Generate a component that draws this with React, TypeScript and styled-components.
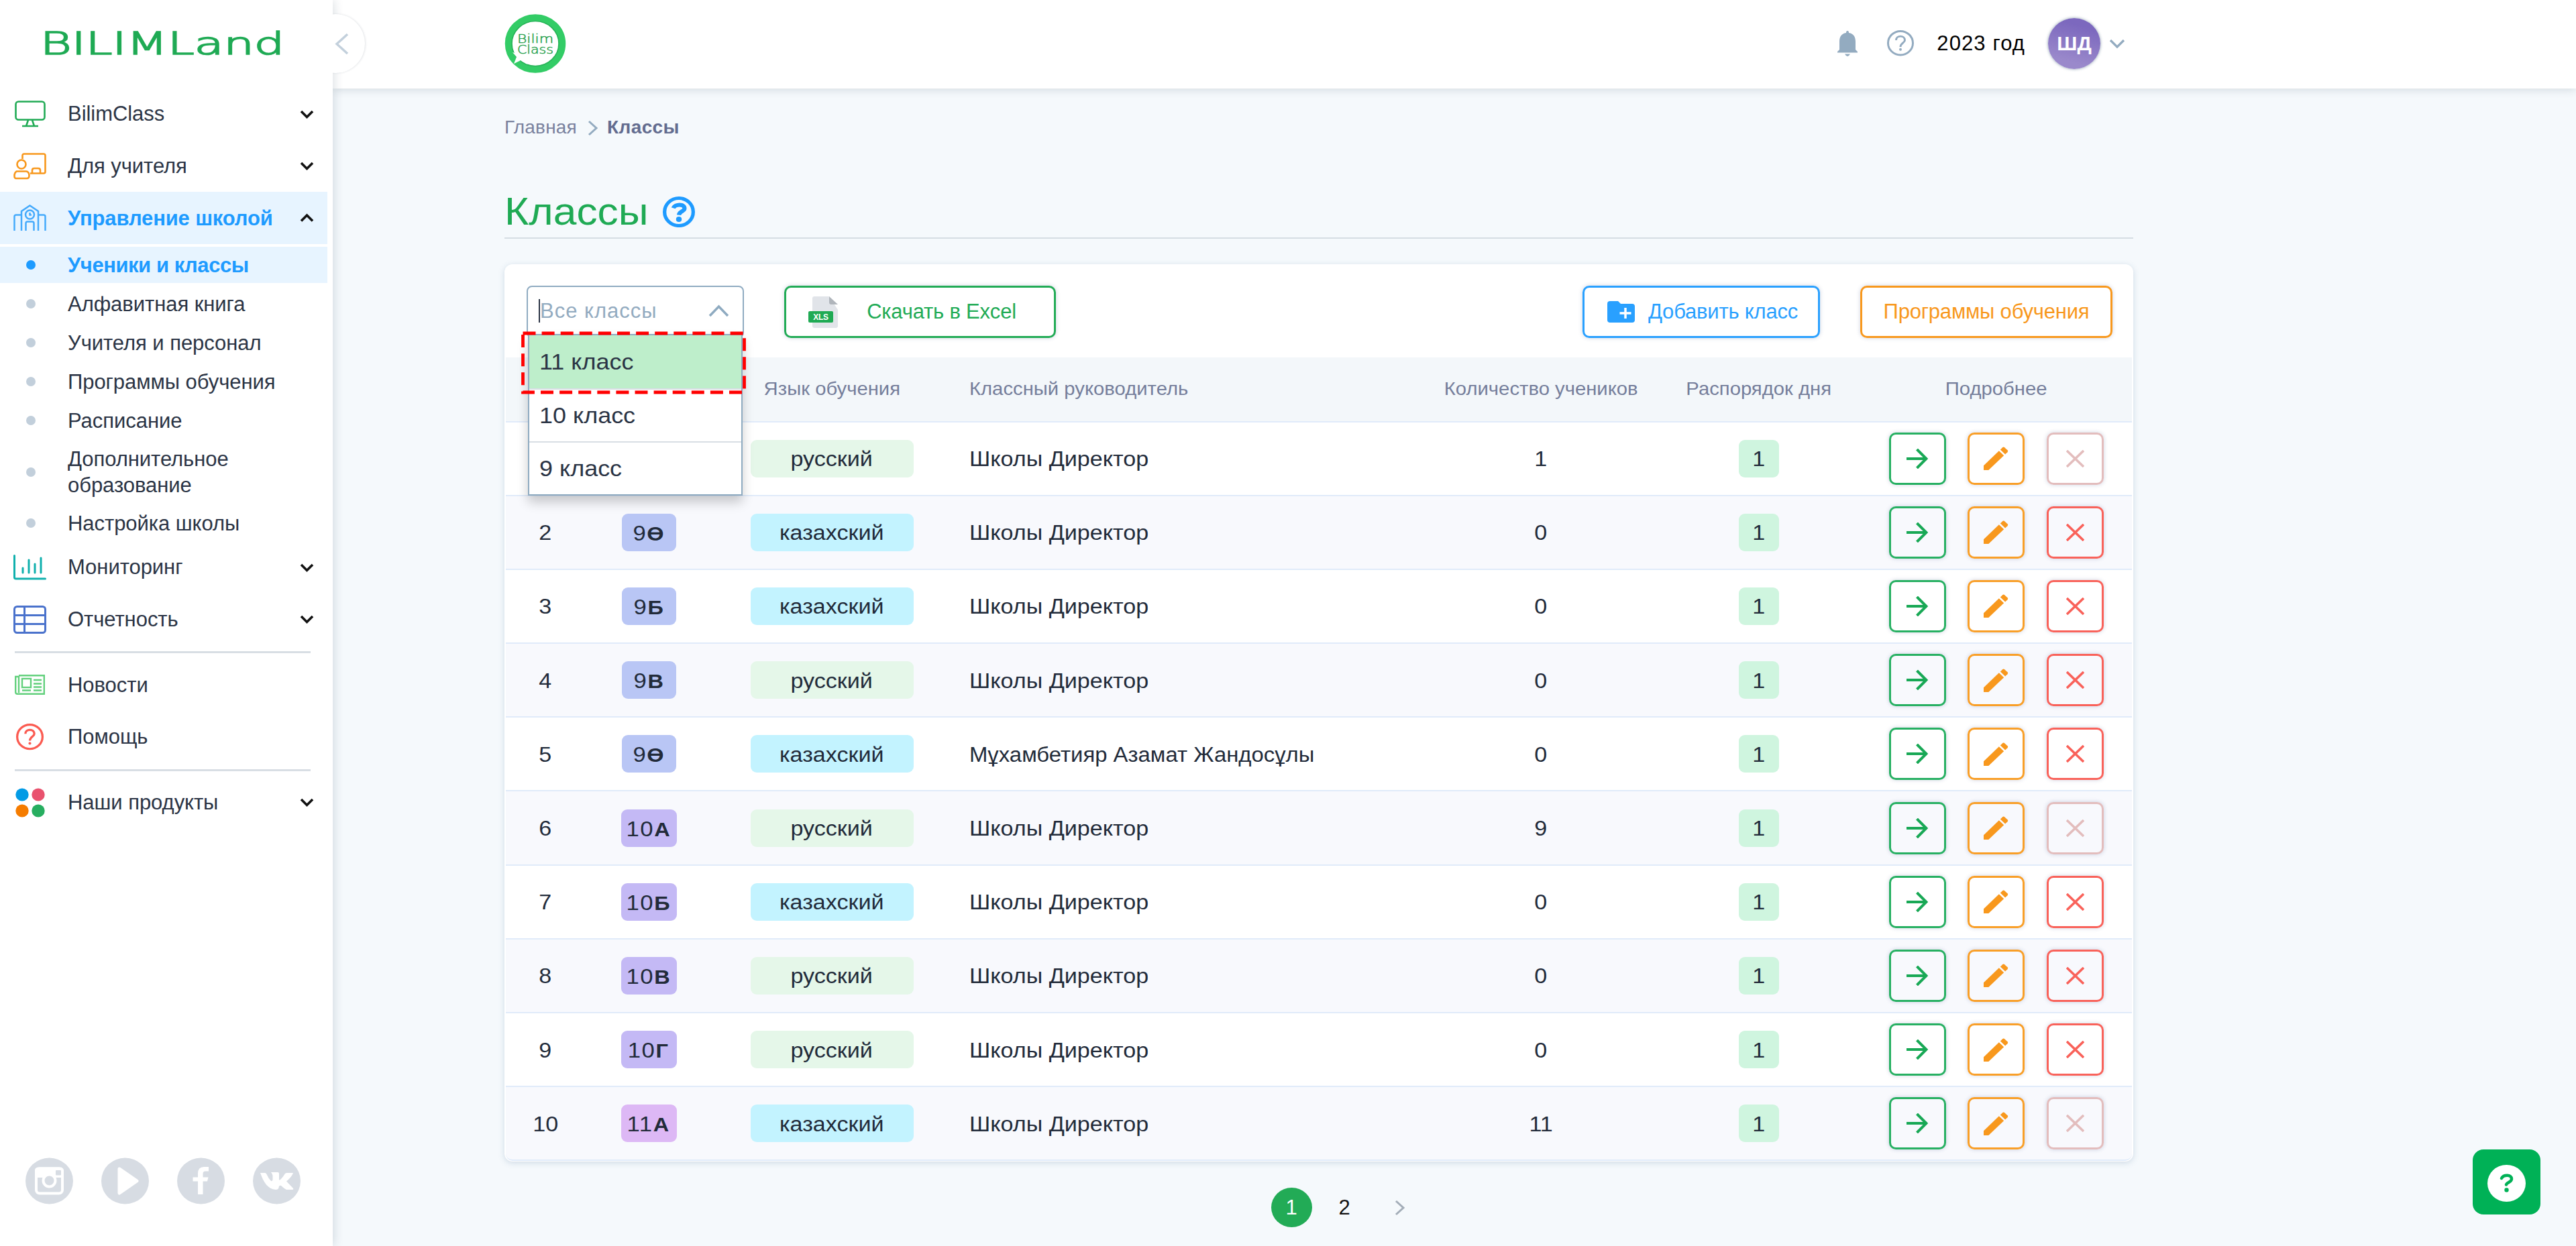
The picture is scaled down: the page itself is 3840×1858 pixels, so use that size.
import * as React from 'react';
import styled, { createGlobalStyle, css } from 'styled-components';

const GlobalStyle = createGlobalStyle`
  * {
    box-sizing: border-box;
  }
  body {
    margin: 0;
    overflow: hidden;
    background-color: #f5f9fc;
    color: #2b3445;
    font-family: 'Liberation Sans', Arial, sans-serif;
    font-size: 31px;
  }
  svg {
    display: block;
    flex: none;
  }
`;

/* The design uses an extended grotesque, so labels are widened a little */
const wide = (ratio: number, origin = 'center') => css`
  display: inline-block;
  white-space: nowrap;
  transform: scaleX(${ratio});
  transform-origin: ${origin} center;
`;

const Page = styled.div`
  display: flex;
  height: 1858px;
`;

/* ---------- sidebar ---------- */

const Sidebar = styled.aside`
  position: relative;
  z-index: 2;
  display: flex;
  flex-direction: column;
  flex: none;
  width: 496px;
  background-color: #fff;
  box-shadow: 2px 0 14px rgba(40, 60, 80, 0.16);
`;

const Brand = styled.div`
  height: 131px;
  padding: 42px 0 0 60px;
`;

const Collapse = styled.button`
  position: absolute;
  top: 21px;
  right: -48px;
  z-index: -1;
  display: flex;
  align-items: center;
  justify-content: flex-end;
  width: 88px;
  height: 88px;
  padding: 0 26px 0 0;
  border: none;
  border-radius: 50%;
  background-color: #fff;
  box-shadow: 1px 0 3px rgba(40, 60, 80, 0.14);
`;

const CollapseCover = styled.div`
  position: absolute;
  top: 0;
  right: 0;
  z-index: -1;
  width: 60px;
  height: 130px;
  background-color: #fff;
`;

const Nav = styled.nav`
  display: flex;
  flex-direction: column;
  flex: 1;
  width: 488px;
`;

const NavItem = styled.a<{ $active?: boolean }>`
  display: flex;
  align-items: center;
  height: 77.7px;
  padding-right: 22px;
  color: ${(p) => (p.$active ? '#1e9bff' : '#2b3445')};
  background-color: ${(p) => (p.$active ? '#e7f4ff' : 'transparent')};
  font-weight: ${(p) => (p.$active ? 'bold' : 'normal')};
`;

const NavIcon = styled.span`
  display: flex;
  justify-content: center;
  width: 89px;
`;

const NavLabel = styled.span<{ $spacing?: number }>`
  flex: 1;
  padding: 1px 0 0 12px;
  letter-spacing: ${(p) => p.$spacing ?? -0.05}px;
  white-space: nowrap;
`;

const SubItem = styled(NavItem)<{ $tall?: boolean }>`
  height: ${(p) => (p.$tall ? 91 : 54)}px;
  margin-top: 4px;
  line-height: 39px;
`;

const Dot = styled.span<{ $active?: boolean }>`
  width: 14px;
  height: 14px;
  margin-left: 2px;
  border-radius: 50%;
  background-color: ${(p) => (p.$active ? '#1e9bff' : '#c2cfdb')};
`;

const Divider = styled.hr`
  width: 441px;
  height: 3px;
  margin: 9px 0 8px 22px;
  border: none;
  background-color: #d8dee4;
`;

const Socials = styled.div`
  display: flex;
  gap: 42px;
  padding: 0 0 62px 38px;
`;

/* ---------- header ---------- */

const Main = styled.main`
  display: flex;
  flex-direction: column;
  flex: 1;
`;

const Header = styled.header`
  display: flex;
  align-items: center;
  height: 132px;
  padding: 0 674px 3px 256px;
  background-color: #fff;
  box-shadow: 0 2px 12px rgba(40, 60, 80, 0.16);
`;

const HeaderTools = styled.div`
  display: flex;
  align-items: center;
  margin-left: auto;
  color: #000;
`;

const Year = styled.span`
  margin: 0 34px 0 34px;
  padding-top: 1px;
  letter-spacing: 1.1px;
`;

const Avatar = styled.div`
  display: flex;
  align-items: center;
  justify-content: center;
  width: 78px;
  height: 76px;
  margin-right: 15px;
  border-radius: 50%;
  background: linear-gradient(195deg, #7c68be 20%, #9a89cb 80%);
  box-shadow: 0 0 4px rgba(60, 90, 120, 0.6);
  color: #fff;
  font-size: 30px;
  font-weight: bold;
`;

/* ---------- content ---------- */

const Content = styled.section`
  width: 2428px;
  margin-left: 256px;
`;

const Breadcrumbs = styled.div`
  display: flex;
  align-items: center;
  height: 40px;
  margin-top: 38px;
  color: #7a829e;
  font-size: 28px;
  letter-spacing: 0.2px;

  svg {
    margin: 2px 16px 0 18px;
  }
  b {
    color: #636c8f;
    letter-spacing: 0.4px;
  }
`;

const TitleRow = styled.div`
  display: flex;
  align-items: center;
  gap: 36px;
  height: 82px;
  margin: 64px 0 38px;
  padding-top: 4px;
  border-bottom: 2px solid #d6dde3;
`;

const Title = styled.h1`
  margin: -4px 0 0;
  color: #1faa54;
  font-size: 58px;
  font-weight: normal;
  ${wide(1.075, 'left')}
`;

const Card = styled.div`
  height: 1338px;
  padding: 0 2px;
  border-radius: 12px;
  background-color: #fff;
  box-shadow: 0 2px 10px rgba(70, 110, 150, 0.22);
`;

const Toolbar = styled.div`
  position: relative;
  display: flex;
  height: 139px;
  padding: 32px 29px 0 31px;
`;

const Select = styled.div`
  display: flex;
  align-items: center;
  justify-content: space-between;
  width: 324px;
  height: 78px;
  padding: 0 22px 3px 16px;
  border: 2px solid #8fabc1;
  border-radius: 8px;
  color: #93abc0;
`;

const Placeholder = styled.span`
  border-left: 2px solid #2b3445;
  line-height: 35px;
  letter-spacing: 1px;
`;

const Menu = styled.ul`
  position: absolute;
  top: 104px;
  left: 33px;
  z-index: 1;
  width: 320px;
  margin: 0;
  padding: 0;
  border: 2px solid #8fabc1;
  background-color: #fff;
  box-shadow: 0 10px 16px rgba(0, 0, 0, 0.2);
  list-style: none;
`;

const Option = styled.li<{ $selected?: boolean }>`
  display: flex;
  align-items: center;
  height: 79px;
  padding: 1px 0 0 15px;
  background-color: ${(p) => (p.$selected ? '#beeecb' : '#fff')};
  font-size: 33px;

  & + & {
    border-top: 2px solid #d8dee4;
  }
  span {
    ${wide(1.09, 'left')}
  }
`;

const Highlight = styled.svg`
  position: absolute;
  top: 100px;
  left: 23px;
  z-index: 2;
`;

const Button = styled.button<{ $color: string; $width: number }>`
  display: flex;
  align-items: center;
  justify-content: center;
  width: ${(p) => p.$width}px;
  height: 78px;
  padding: 0;
  border: 3px solid ${(p) => p.$color};
  border-radius: 10px;
  background-color: transparent;
  box-shadow: 0 0 6px rgba(40, 60, 120, 0.22);
  color: ${(p) => p.$color};
  font: inherit;
  letter-spacing: -0.2px;
`;

const ExcelButton = styled(Button)`
  margin-left: 60px;
  gap: 43px;
  padding-right: 23px;
`;

const AddButton = styled(Button)`
  gap: 20px;
  margin: 0 60px 0 auto;
  padding-left: 4px;
`;

const Row = styled.div<{ $striped?: boolean }>`
  display: grid;
  grid-template-columns: 118px 190px 356px 698px 362px 287px 1fr;
  align-items: center;
  justify-items: center;
  height: 110.2px;
  border-bottom: 2px solid #e0ebfa;
  background-color: ${(p) => (p.$striped ? '#f8f9fd' : '#fff')};
  color: #222b3a;

  &:last-child {
    border-radius: 0 0 10px 10px;
  }
`;

const HeadRow = styled(Row)`
  height: 96.5px;
  background-color: #f3f7fa;
  color: #757e9b;
  font-size: 28px;
`;

const HeadCell = styled.span<{ $left?: boolean }>`
  ${wide(1.045)}
  ${(p) => p.$left && 'justify-self: start; margin-left: 27px; transform-origin: left;'}
`;

const Cell = styled.span<{ $left?: boolean; $compact?: boolean }>`
  ${wide(1.1)}
  padding-top: 3px;
  ${(p) => p.$left && 'justify-self: start; margin-left: 27px; transform-origin: left;'}
  ${(p) => p.$compact && 'transform: scaleX(1.06);'}
`;

const Pill = styled.span<{ $bg: string; $width: number }>`
  display: flex;
  align-items: center;
  justify-content: center;
  width: ${(p) => p.$width}px;
  height: 56px;
  border-radius: 9px;
  background-color: ${(p) => p.$bg};
`;

const GradeText = styled.span`
  ${wide(1.12)}
  padding-top: 4px;
  letter-spacing: 1.4px;

  b {
    font-size: 29px;
  }
`;

const Actions = styled.div`
  display: flex;
  gap: 32.5px;
  padding-left: 8px;
`;

const HeadActions = styled.div`
  padding-left: 8px;
`;

const Pagination = styled.div`
  display: flex;
  align-items: center;
  justify-content: center;
  height: 61px;
  margin: 38px 0 0 54px;
  color: #111;
`;

const PageNumber = styled.span<{ $current?: boolean }>`
  display: flex;
  align-items: center;
  justify-content: center;
  width: 61px;
  height: 59px;
  margin-right: 18px;
  border-radius: 50%;
  background-color: ${(p) => (p.$current ? '#22ab56' : 'transparent')};
  color: ${(p) => (p.$current ? '#fff' : '#111')};

  & + svg {
    margin-left: 28px;
  }
`;

const HelpFab = styled.button`
  position: fixed;
  right: 53px;
  bottom: 47px;
  display: flex;
  align-items: center;
  justify-content: center;
  width: 101px;
  height: 97px;
  padding: 4px 0 0;
  border: none;
  border-radius: 16px;
  background-color: #00b156;
`;

/* ---------- icons ---------- */

interface ChevronProps {
  dir: 'up' | 'down' | 'left' | 'right';
  long: number;
  short: number;
  color: string;
  weight: number;
}

function Chevron({ dir, long, short, color, weight }: ChevronProps) {
  const horizontal = dir === 'left' || dir === 'right';
  const w = horizontal ? short : long;
  const h = horizontal ? long : short;
  const points = {
    down: `0,0 ${w / 2},${h} ${w},0`,
    up: `0,${h} ${w / 2},0 ${w},${h}`,
    left: `${w},0 0,${h / 2} ${w},${h}`,
    right: `0,0 ${w},${h / 2} 0,${h}`,
  }[dir];
  return (
    <svg width={w} height={h} overflow="visible" fill="none" stroke={color} strokeWidth={weight}>
      <polyline points={points} />
    </svg>
  );
}

function BrandLogo() {
  return (
    <svg width="364" height="44" overflow="visible">
      <text
        x="0"
        y="38.5"
        fill="#1faa54"
        stroke="#1faa54"
        strokeWidth="1.7"
        fontFamily="'DejaVu Sans', sans-serif"
        fontWeight="200"
        fontSize="45.5"
        textLength="364"
        lengthAdjust="spacingAndGlyphs"
      >
        BILIMLand
      </text>
    </svg>
  );
}

function ClassLogo() {
  return (
    <svg width="92" height="88" viewBox="0 0 92 88">
      <ellipse cx="46" cy="44" rx="40" ry="38.5" fill="#fff" stroke="#33cc66" strokeWidth="10.5" />
      <ellipse cx="46" cy="44" rx="35" ry="33.5" fill="none" stroke="#28b358" strokeWidth="1.6" />
      <path d="M12 57 L18 64 L14 74 L24 69 L34 75 L30 62Z" fill="#fff" />
      <g
        fill="#279f4c"
        stroke="#279f4c"
        strokeWidth="0.5"
        fontFamily="'DejaVu Sans', sans-serif"
        fontWeight="200"
        fontSize="18"
      >
        <text x="19" y="43" textLength="54" lengthAdjust="spacingAndGlyphs">Bilim</text>
        <text x="19" y="58.5" textLength="54" lengthAdjust="spacingAndGlyphs">Class</text>
      </g>
    </svg>
  );
}

interface QuestionProps {
  size: number;
  color: string;
  weight: number;
  bold?: boolean;
}

function QuestionCircle({ size, color, weight, bold }: QuestionProps) {
  const hook = bold
    ? 'M13 15 C15 9.5 27 9 27 15.5 C27 19.5 20.5 19 20 24'
    : 'M13.5 15.5 C13.5 7.5 26.5 7.5 26.5 15.5 C26.5 19.5 20 20 20 26';
  return (
    <svg width={size} height={size * 0.96} viewBox="0 0 40 40" fill="none" stroke={color} preserveAspectRatio="none">
      <circle cx="20" cy="20" r={20 - weight / 2} strokeWidth={weight} />
      <path d={hook} strokeWidth={bold ? 5.2 : weight} />
      <circle cx="20" cy={bold ? 29.5 : 30} r={bold ? 3.5 : 2} fill={color} stroke="none" />
    </svg>
  );
}

const navIcons = {
  monitor: (
    <svg width="46" height="40" viewBox="0 0 46 40" fill="none" stroke="#22ab56" strokeWidth="2.6">
      <rect x="1.5" y="1.5" width="43" height="27" rx="4" />
      <path d="M20 29 L17 38 M26 29 L29 38 M11 38 H35" />
    </svg>
  ),
  teacher: (
    <svg width="49" height="40" viewBox="0 0 49 40" fill="none" stroke="#f8981d" strokeWidth="2.6">
      <path d="M13.5 9 V4 Q13.5 1.5 16 1.5 H45 Q47.5 1.5 47.5 4 V28 Q47.5 30.5 45 30.5 H25" />
      <path d="M28 30 V26 Q28 23 31 23 H37 Q40 23 40 26 V30" />
      <circle cx="12" cy="17" r="6.5" />
      <path d="M5 27.5 H19 Q23.5 28 23.5 34 Q23.5 38 20 38 H4 Q1.5 38 1.5 34.5 Q1.5 29 5 27.5Z" />
    </svg>
  ),
  school: (
    <svg width="49" height="40" viewBox="0 0 49 40" fill="none" stroke="#45aafc" strokeWidth="2.5">
      <path d="M1.5 39 V18 Q1.5 15.5 4 15.5 H11 M12 39 V10 L24.5 1.5 L37 10 V39 M38 15.5 H45 Q47.5 15.5 47.5 18 V39" />
      <circle cx="24.5" cy="15" r="6.5" />
      <path d="M24.5 12 V15.5 H27" />
      <path d="M18.5 39 V28 Q18.5 25.5 21 25.5 H28 Q30.5 25.5 30.5 28 V39" />
    </svg>
  ),
  chart: (
    <svg width="49" height="38" viewBox="0 0 49 38" fill="none" stroke="#10b0ad" strokeWidth="3" strokeLinecap="round">
      <path d="M1.5 1.5 V34 Q1.5 36 4 36 H47.5" />
      <path d="M14 20 V27 M23 8 V27 M32 14 V27 M41 5 V27" />
    </svg>
  ),
  table: (
    <svg width="49" height="42" viewBox="0 0 49 42" fill="none" stroke="#4a72cc" strokeWidth="3">
      <rect x="1.5" y="1.5" width="46" height="39" rx="4" />
      <path d="M16.5 1.5 V40 M1.5 14.5 H47.5 M1.5 27.5 H47.5" />
    </svg>
  ),
  news: (
    <svg width="45" height="30" viewBox="0 0 45 30" fill="none" stroke="#62d07c" strokeWidth="2.4">
      <path d="M6 1.2 H43.8 V28.8 H4 Q1.2 28.8 1.2 26 V3 H6 V27" />
      <rect x="11" y="6" width="13" height="13" />
      <path d="M28 8 H40 M28 13.5 H40 M28 18.5 H40 M28 23.5 H40 M11 23.5 H24" />
    </svg>
  ),
  help: <QuestionCircle size={41} color="#fb5b51" weight={3.2} />,
  products: (
    <svg width="44" height="44" viewBox="0 0 44 44">
      <ellipse cx="10" cy="10" rx="9.7" ry="9.5" fill="#039be5" />
      <ellipse cx="34" cy="10" rx="9.7" ry="9.5" fill="#e9526e" />
      <ellipse cx="10" cy="34" rx="9.7" ry="9.5" fill="#f57c00" />
      <ellipse cx="34" cy="34" rx="9.7" ry="9.5" fill="#27ae60" />
    </svg>
  ),
};

function SocialIcons() {
  const back = <ellipse cx="35.5" cy="35" rx="35.5" ry="34.5" fill="#d7dce3" />;
  return (
    <Socials>
      <svg width="71" height="70">
        {back}
        <rect x="16" y="16.5" width="39" height="37" rx="5" fill="none" stroke="#fff" strokeWidth="4" />
        <path d="M14 19 Q14 14.5 20 14.5 H51 Q57 14.5 57 20 V30 H14Z" fill="#fff" />
        <circle cx="35.5" cy="34.5" r="9" fill="#d7dce3" stroke="#fff" strokeWidth="4" />
        <rect x="45" y="19" width="8" height="7.5" rx="1" fill="#d7dce3" />
      </svg>
      <svg width="71" height="70">
        {back}
        <path d="M27 17 L53 35 L27 53Z" fill="#fff" stroke="#fff" strokeWidth="5" strokeLinejoin="round" />
      </svg>
      <svg width="71" height="70">
        {back}
        <path d="M31 55 V35.5 H23.5 V29.5 H31 V24 Q31 14 40 14 H47 V20.5 H42 Q38.5 20.5 38.5 24 V29.5 H46.5 L45 35.5 H38.5 V55Z" fill="#fff" />
      </svg>
      <svg width="71" height="70">
        {back}
        <path d="M11 23 H18 Q20 23 21 26 Q23 31 27 35 Q29 36 29.5 33 V27 Q29 24 27 22 H37 Q39 22 39 24 V32 Q39 35 41 33 Q45 29 48 24 Q49 23 51 23 H60 Q58 29 50 35.5 L60 46 Q61 48 58 48 H50 Q46 46 42 42 Q39 41 38.5 45 Q38 48 34 48 C22 47 16 37 11 23Z" fill="#fff" />
      </svg>
    </Socials>
  );
}

function BellIcon() {
  return (
    <svg width="30" height="38" viewBox="0 0 30 38" fill="#93abc0">
      <path d="M15 0 C17 0 17 2 17 3 C24 4 27 9 27 16 V28 L30 31 V32.5 H0 V31 L3 28 V16 C3 9 6 4 13 3 C13 2 13 0 15 0Z" />
      <path d="M11 34.5 H19 Q17 38 15 38 Q13 38 11 34.5Z" />
    </svg>
  );
}

function XlsIcon() {
  return (
    <svg width="44" height="47" viewBox="0 0 44 47">
      <path d="M9 0 H31 L44 20 V44 Q44 47 41 47 H9 Q6 47 6 44 V3 Q6 0 9 0Z" fill="#e1e4e9" />
      <path d="M31 0 L44 12 H34 Q31 12 31 9Z" fill="#b0b5bb" />
      <rect x="0" y="22" width="37" height="17" rx="2" fill="#1faa54" />
      <text x="18.5" y="35" textAnchor="middle" fill="#fff" fontSize="12" fontWeight="bold">XLS</text>
    </svg>
  );
}

function FolderPlusIcon() {
  return (
    <svg width="41" height="32" viewBox="0 0 41 32">
      <path d="M4 0 H16 L20 4 H37 Q41 4 41 8 V28 Q41 32 37 32 H4 Q0 32 0 28 V4 Q0 0 4 0Z" fill="#29a0ff" />
      <path d="M27 10 V26 M18.5 18 H35.5" stroke="#fff" strokeWidth="3.5" />
    </svg>
  );
}

function ArrowIcon() {
  return (
    <svg width="32" height="30" viewBox="0 0 32 30" fill="none" stroke="#18a855" strokeWidth="4">
      <path d="M0 15 H29 M15.5 1 L29.5 15 L15.5 29" />
    </svg>
  );
}

function PencilIcon() {
  return (
    <svg width="37" height="35" viewBox="0 0 38 36" fill="#f8981d">
      <path d="M0 29 L23.5 6.5 L31 13.5 L7.5 36 H0Z" />
      <path d="M25.5 4.5 L29 1.2 Q30.5 0 32 1.2 L36.5 5.5 Q38 7 36.5 8.5 L33 11.7Z" />
    </svg>
  );
}

function CrossIcon({ color }: { color: string }) {
  return (
    <svg width="27" height="26" viewBox="0 0 27 26" fill="none" stroke={color} strokeWidth="3.6">
      <path d="M1 1 L26 25 M26 1 L1 25" />
    </svg>
  );
}

/* ---------- data ---------- */

const subItems = [
  'Алфавитная книга',
  'Учителя и персонал',
  'Программы обучения',
  'Расписание',
  'Дополнительное\nобразование',
  'Настройка школы',
];

interface SchoolClass {
  no?: number;
  grade?: number;
  letter?: string;
  lang: 'русский' | 'казахский';
  teacher: string;
  pupils: number;
}

const director = 'Школы Директор';

const classes: SchoolClass[] = [
  // number and grade of this row are under the open menu
  { lang: 'русский', teacher: director, pupils: 1 },
  { no: 2, grade: 9, letter: 'Ө', lang: 'казахский', teacher: director, pupils: 0 },
  { no: 3, grade: 9, letter: 'Б', lang: 'казахский', teacher: director, pupils: 0 },
  { no: 4, grade: 9, letter: 'В', lang: 'русский', teacher: director, pupils: 0 },
  { no: 5, grade: 9, letter: 'Ө', lang: 'казахский', teacher: 'Мұхамбетияр Азамат Жандосұлы', pupils: 0 },
  { no: 6, grade: 10, letter: 'А', lang: 'русский', teacher: director, pupils: 9 },
  { no: 7, grade: 10, letter: 'Б', lang: 'казахский', teacher: director, pupils: 0 },
  { no: 8, grade: 10, letter: 'В', lang: 'русский', teacher: director, pupils: 0 },
  { no: 9, grade: 10, letter: 'Г', lang: 'русский', teacher: director, pupils: 0 },
  { no: 10, grade: 11, letter: 'А', lang: 'казахский', teacher: director, pupils: 11 },
];

const gradeColors: Record<number, string> = { 9: '#b9c6f5', 10: '#c4b9f5', 11: '#ddb8f5' };
const langColors = { русский: '#e5f7e9', казахский: '#c3f3ff' };

/* ---------- sections ---------- */

interface NavEntryProps {
  icon: React.ReactNode;
  label: string;
  expandable?: boolean;
  active?: boolean;
}

function NavEntry({ icon, label, expandable, active }: NavEntryProps) {
  return (
    <NavItem $active={active}>
      <NavIcon>{icon}</NavIcon>
      <NavLabel $spacing={active ? -0.15 : undefined}>{label}</NavLabel>
      {expandable && <Chevron dir={active ? 'up' : 'down'} long={17} short={8.5} color="#111" weight={3.6} />}
    </NavItem>
  );
}

function SideMenu() {
  return (
    <Sidebar>
      <Collapse>
        <Chevron dir="left" long={29} short={16} color="#c3d0dc" weight={3.5} />
      </Collapse>
      <CollapseCover />
      <Brand>
        <BrandLogo />
      </Brand>
      <Nav>
        <NavEntry icon={navIcons.monitor} label="BilimClass" expandable />
        <NavEntry icon={navIcons.teacher} label="Для учителя" expandable />
        <NavEntry icon={navIcons.school} label="Управление школой" expandable active />
        <SubItem $active>
          <NavIcon>
            <Dot $active />
          </NavIcon>
          <NavLabel $spacing={-0.45}>Ученики и классы</NavLabel>
        </SubItem>
        {subItems.map((item) => (
          <SubItem key={item} $tall={item.includes('\n')}>
            <NavIcon>
              <Dot />
            </NavIcon>
            <NavLabel>
              {item.split('\n').map((line) => (
                <div key={line}>{line}</div>
              ))}
            </NavLabel>
          </SubItem>
        ))}
        <NavEntry icon={navIcons.chart} label="Мониторинг" expandable />
        <NavEntry icon={navIcons.table} label="Отчетность" expandable />
        <Divider />
        <NavEntry icon={navIcons.news} label="Новости" />
        <NavEntry icon={navIcons.help} label="Помощь" />
        <Divider />
        <NavEntry icon={navIcons.products} label="Наши продукты" expandable />
      </Nav>
      <SocialIcons />
    </Sidebar>
  );
}

function ClassRow({ item, striped }: { item: SchoolClass; striped: boolean }) {
  const removeColor = item.pupils > 0 ? '#e3bdbd' : '#f9625a';
  return (
    <Row $striped={striped}>
      <Cell>{item.no}</Cell>
      {item.grade ? (
        <Pill $bg={gradeColors[item.grade]} $width={item.grade === 9 ? 81 : 83}>
          <GradeText>
            {item.grade}
            <b>{item.letter}</b>
          </GradeText>
        </Pill>
      ) : (
        <span />
      )}
      <Pill $bg={langColors[item.lang]} $width={243}>
        <Cell>{item.lang}</Cell>
      </Pill>
      <Cell $left $compact={item.teacher.length > 20}>
        {item.teacher}
      </Cell>
      <Cell>{item.pupils}</Cell>
      <Pill $bg="#cff5df" $width={60}>
        <Cell>1</Cell>
      </Pill>
      <Actions>
        <Button $color="#27b062" $width={85}>
          <ArrowIcon />
        </Button>
        <Button $color="#f99f28" $width={85}>
          <PencilIcon />
        </Button>
        <Button $color={removeColor} $width={85}>
          <CrossIcon color={removeColor} />
        </Button>
      </Actions>
    </Row>
  );
}

export default function App() {
  return (
    <>
      <GlobalStyle />
      <Page>
        <SideMenu />
        <Main>
          <Header>
            <ClassLogo />
            <HeaderTools>
              <BellIcon />
              <svg width="44" height="1" />
              <QuestionCircle size={40} color="#93abc0" weight={3} />
              <Year>2023 год</Year>
              <Avatar>ШД</Avatar>
              <Chevron dir="down" long={20} short={10} color="#93abc0" weight={3.2} />
            </HeaderTools>
          </Header>
          <Content>
            <Breadcrumbs>
              <span>Главная</span>
              <Chevron dir="right" long={20} short={11} color="#93abc0" weight={3} />
              <b>Классы</b>
            </Breadcrumbs>
            <TitleRow>
              <Title>Классы</Title>
              <QuestionCircle size={48} color="#1e9bff" weight={4.4} bold />
            </TitleRow>
            <Card>
              <Toolbar>
                <Select>
                  <Placeholder>Все классы</Placeholder>
                  <Chevron dir="up" long={27} short={14} color="#8fabc1" weight={3.5} />
                </Select>
                <Menu>
                  <Option $selected>
                    <span>11 класс</span>
                  </Option>
                  <Option>
                    <span>10 класс</span>
                  </Option>
                  <Option>
                    <span>9 класс</span>
                  </Option>
                </Menu>
                <Highlight width="340" height="98">
                  <rect x="2.5" y="3" width="330" height="88" fill="none" stroke="#f00" strokeWidth="4.8" strokeDasharray="19 9.1" />
                </Highlight>
                <ExcelButton $color="#22ab56" $width={405}>
                  <XlsIcon />
                  Скачать в Excel
                </ExcelButton>
                <AddButton $color="#29a0ff" $width={354}>
                  <FolderPlusIcon />
                  Добавить класс
                </AddButton>
                <Button $color="#f8981d" $width={376}>
                  Программы обучения
                </Button>
              </Toolbar>
              <HeadRow>
                <span />
                <span />
                <HeadCell>Язык обучения</HeadCell>
                <HeadCell $left>Классный руководитель</HeadCell>
                <HeadCell>Количество учеников</HeadCell>
                <HeadCell>Распорядок дня</HeadCell>
                <HeadActions>
                  <HeadCell>Подробнее</HeadCell>
                </HeadActions>
              </HeadRow>
              {classes.map((item, index) => (
                <ClassRow key={index} item={item} striped={index % 2 === 1} />
              ))}
            </Card>
            <Pagination>
              <PageNumber $current>1</PageNumber>
              <PageNumber>2</PageNumber>
              <Chevron dir="right" long={20} short={11} color="#a3adb8" weight={3} />
            </Pagination>
          </Content>
        </Main>
        <HelpFab>
          <svg width="57" height="55" viewBox="0 0 57 55">
            <ellipse cx="28.5" cy="27.5" rx="28.5" ry="27.5" fill="#fff" />
            <path d="M21 20 C24 14.5 36 14 36 21 C36 26 29 25.5 28 29.5" fill="none" stroke="#00b156" strokeWidth="4.5" strokeLinecap="round" />
            <circle cx="28.5" cy="37.5" r="3.2" fill="#00b156" />
          </svg>
        </HelpFab>
      </Page>
    </>
  );
}
